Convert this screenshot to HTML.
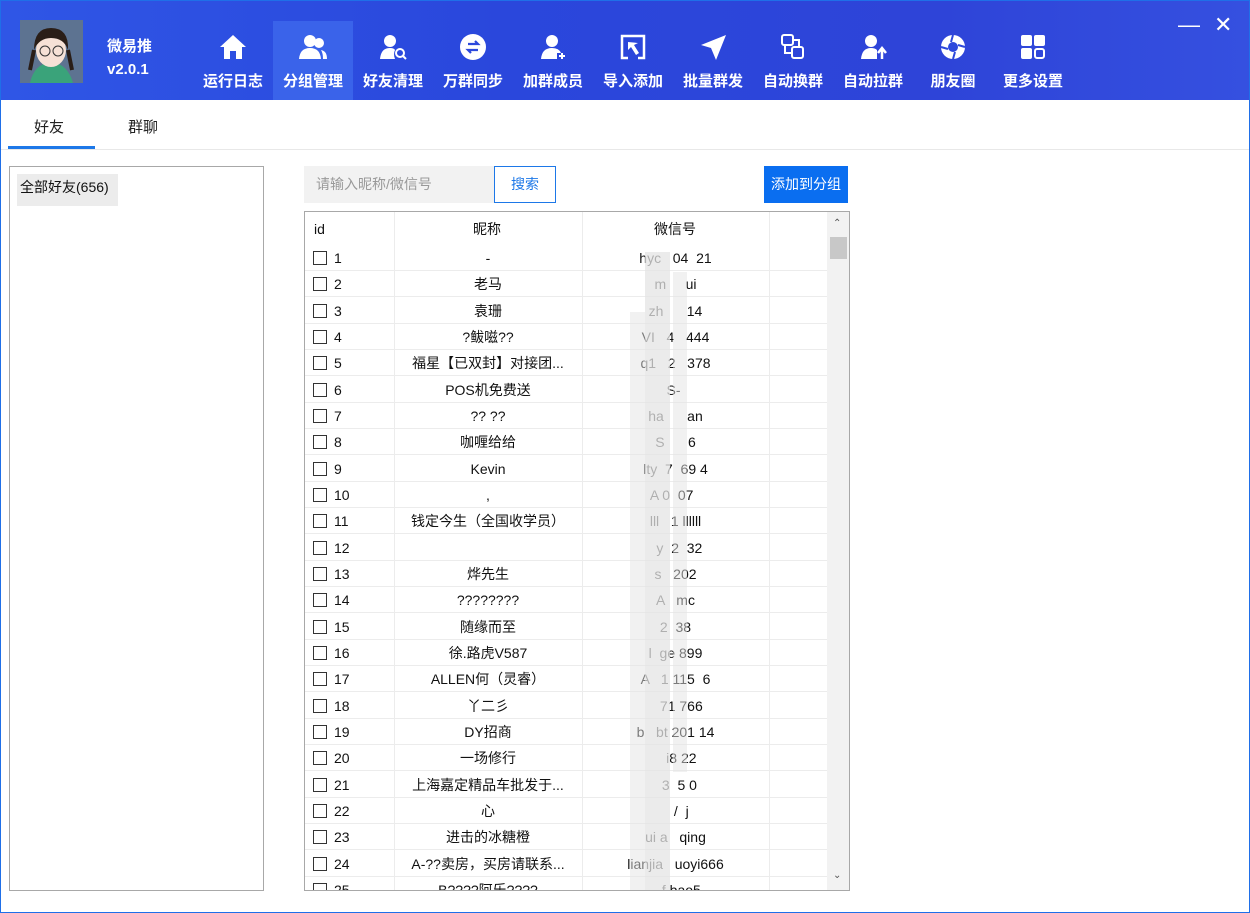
<!DOCTYPE html>
<html><head><meta charset="utf-8"><style>
*{margin:0;padding:0;box-sizing:border-box}
body{width:1250px;height:913px;background:#fff;font-family:"Liberation Sans","Noto Sans CJK SC",sans-serif;position:relative;overflow:hidden}
.frame{position:absolute;left:0;top:0;width:1250px;height:913px;border:1px solid #1f6fe8;pointer-events:none}
.hdr{position:absolute;left:0;top:0;width:1250px;height:100px;background:linear-gradient(90deg,#2f56e6 0%,#2a47dc 40%,#2e44d8 75%,#3550e0 100%)}
.av{position:absolute;left:20px;top:20px;width:63px;height:63px;background:#5a7090}
.nm{position:absolute;left:107px;top:35px;color:#fff;font-size:15px;font-weight:bold}
.ver{position:absolute;left:107px;top:61px;color:#fff;font-size:15px;font-weight:bold}
.nav{position:absolute;top:21px;height:79px;width:80px;text-align:center;color:#fff;font-size:15px;font-weight:bold}
.nav.act{background:#3a63ea}
.nav svg{position:absolute;left:26px;top:12px}
.nav span{position:absolute;left:0;right:0;top:49px}
.wc{position:absolute;color:#fff;font-size:22px;top:12px}
.tab{position:absolute;top:116px;font-size:15px;color:#222}
.tabline{position:absolute;left:8px;top:146px;width:87px;height:3px;background:#1d78e8}
.sep{position:absolute;left:0;top:149px;width:1250px;height:1px;background:#e8e8e8}
.left{position:absolute;left:9px;top:166px;width:255px;height:725px;border:1px solid #a8a8a8}
.left div{position:absolute;left:7px;top:7px;width:101px;height:32px;background:#ececec;font-size:14px;line-height:26px;padding-left:3px;color:#111}
.inp{position:absolute;left:304px;top:166px;width:190px;height:37px;background:#f2f2f2;color:#999;font-size:14px;line-height:37px;padding-left:12px}
.sbtn{position:absolute;left:494px;top:166px;width:62px;height:37px;border:1px solid #1d78e8;color:#1d78e8;font-size:14px;line-height:35px;text-align:center}
.abtn{position:absolute;left:764px;top:166px;width:84px;height:37px;background:#0a6ef0;color:#fff;font-size:14px;line-height:37px;text-align:center}
.tbl{position:absolute;left:304px;top:211px;width:546px;height:680px;border:1px solid #a8a8a8;overflow:hidden}
.th{position:absolute;top:0;height:33px;font-size:14px;line-height:34px;color:#111}
.row{position:absolute;left:0;width:522px;height:26px;border-bottom:1px solid #ececec;font-size:14px;color:#111;line-height:26px}
.row .id{position:absolute;left:8px;top:0}
.cb{display:inline-block;width:14px;height:14px;border:1px solid #333;vertical-align:-2px;margin-right:7px}
.row .n{position:absolute;left:89px;width:188px;text-align:center}
.row .w{position:absolute;left:277px;width:187px;text-align:center;white-space:pre}
.vl{position:absolute;top:0;width:1px;height:680px;background:#ececec}
.sb{position:absolute;left:522px;top:0;width:22px;height:678px;background:#f2f2f2}
.thumb{position:absolute;left:3px;top:25px;width:17px;height:22px;background:#c8c8c8}
.blur{position:absolute;background:#e4e4e4;opacity:.75}
</style></head><body>
<div class="hdr">
 <div class="av"><svg width="63" height="63"><rect width="63" height="63" fill="#5d7391"/><path d="M10 63 Q14 44 31 42 Q48 44 53 63Z" fill="#3aa37a"/><ellipse cx="31" cy="30" rx="15" ry="17" fill="#f6e1d6"/><path d="M14 30 Q14 8 31 8 Q49 8 48 30 Q44 18 31 18 Q19 18 14 30Z" fill="#2a1e18"/><circle cx="25" cy="31" r="5" fill="none" stroke="#333"/><circle cx="38" cy="31" r="5" fill="none" stroke="#333"/><path d="M14 30 L10 50 M48 30 L52 50" stroke="#2a1e18" stroke-width="4"/></svg></div>
 <div class="nm">微易推</div><div class="ver">v2.0.1</div>
 <div class="nav" style="left:193px"><svg width="28" height="28" viewBox="0 0 28 28"><path d="M14 2 L27 14 H23 V26 H17 V18 H11 V26 H5 V14 H1Z" fill="#fff"/></svg><span>运行日志</span></div>
 <div class="nav act" style="left:273px"><svg width="28" height="28" viewBox="0 0 28 28"><circle cx="11" cy="8" r="6" fill="#fff"/><circle cx="20" cy="10" r="5" fill="#fff"/><path d="M0 26 Q1 15 11 15 Q21 15 22 26Z M22 17 Q28 18 28 26 H24 Q24 20 22 17Z" fill="#fff"/></svg><span>分组管理</span></div>
 <div class="nav" style="left:353px"><svg width="28" height="28" viewBox="0 0 28 28"><circle cx="11" cy="8" r="6" fill="#fff"/><path d="M1 26 Q2 15 11 15 Q15 15 16 17 Q14 21 16 26Z" fill="#fff"/><circle cx="21" cy="20" r="4" fill="none" stroke="#fff" stroke-width="2"/><path d="M24 23 L27 26" stroke="#fff" stroke-width="2"/></svg><span>好友清理</span></div>
 <div class="nav" style="left:433px"><svg width="28" height="28" viewBox="0 0 28 28"><circle cx="14" cy="14" r="13" fill="#fff"/><path d="M9 11 H19 L16 8 M19 17 H9 L12 20" stroke="#2c48dc" stroke-width="2.2" fill="none"/></svg><span>万群同步</span></div>
 <div class="nav" style="left:513px"><svg width="28" height="28" viewBox="0 0 28 28"><circle cx="13" cy="8" r="6" fill="#fff"/><path d="M2 26 Q3 15 13 15 Q20 15 22 20 H18 V26Z" fill="#fff"/><path d="M23 20 V26 M20 23 H26" stroke="#fff" stroke-width="2"/></svg><span>加群成员</span></div>
 <div class="nav" style="left:593px"><svg width="28" height="28" viewBox="0 0 28 28"><path d="M9 25 H3 V3 H25 V25 H19" stroke="#fff" stroke-width="2.5" fill="none"/><path d="M9 9 L9 17 L12 14 L17 22 L20 20 L15 12 L19 10Z" fill="#fff"/></svg><span>导入添加</span></div>
 <div class="nav" style="left:673px"><svg width="28" height="28" viewBox="0 0 28 28"><path d="M27 2 L2 12 L12 15 L17 27Z" fill="#fff"/></svg><span>批量群发</span></div>
 <div class="nav" style="left:753px"><svg width="28" height="28" viewBox="0 0 28 28"><rect x="3" y="2" width="11" height="10" rx="2" fill="none" stroke="#fff" stroke-width="2"/><rect x="13" y="14" width="11" height="11" rx="2" fill="none" stroke="#fff" stroke-width="2"/><path d="M6 12 V20 H13 M14 7 H20 V14" stroke="#fff" stroke-width="2" fill="none"/></svg><span>自动换群</span></div>
 <div class="nav" style="left:833px"><svg width="28" height="28" viewBox="0 0 28 28"><circle cx="12" cy="8" r="6" fill="#fff"/><path d="M2 26 Q3 15 12 15 Q16 15 18 17 V26Z" fill="#fff"/><path d="M23 26 V16 M19 20 L23 15 L27 20" stroke="#fff" stroke-width="2.5" fill="none"/></svg><span>自动拉群</span></div>
 <div class="nav" style="left:913px"><svg width="28" height="28" viewBox="0 0 28 28"><circle cx="14" cy="14" r="12" fill="#fff"/><circle cx="14" cy="14" r="5" fill="#2c48dc"/><path d="M14 2 L12 9 M26 14 L19 12 M14 26 L16 19 M2 14 L9 16" stroke="#2c48dc" stroke-width="2"/></svg><span>朋友圈</span></div>
 <div class="nav" style="left:993px"><svg width="28" height="28" viewBox="0 0 28 28"><rect x="2" y="2" width="11" height="11" rx="2" fill="#fff"/><rect x="15" y="2" width="11" height="11" rx="2" fill="#fff"/><rect x="2" y="15" width="11" height="11" rx="2" fill="#fff"/><rect x="16" y="16" width="9" height="9" rx="2" fill="none" stroke="#fff" stroke-width="2"/></svg><span>更多设置</span></div>
 <div class="wc" style="left:1178px">—</div><div class="wc" style="left:1214px">✕</div>
</div>
<div class="tab" style="left:34px">好友</div><div class="tab" style="left:128px">群聊</div>
<div class="tabline"></div><div class="sep"></div>
<div class="left"><div>全部好友(656)</div></div>
<div class="inp">请输入昵称/微信号</div><div class="sbtn">搜索</div><div class="abtn">添加到分组</div>
<div class="tbl">
 <div class="vl" style="left:89px"></div><div class="vl" style="left:277px"></div><div class="vl" style="left:464px"></div>
 <div class="th" style="left:9px">id</div><div class="th" style="left:168px">昵称</div><div class="th" style="left:349px">微信号</div>
 <div class="row" style="top:33px"><span class="id"><i class="cb"></i>1</span><span class="n">-</span><span class="w">hyc   04  21</span></div>
 <div class="row" style="top:59px"><span class="id"><i class="cb"></i>2</span><span class="n">老马</span><span class="w">m     ui</span></div>
 <div class="row" style="top:86px"><span class="id"><i class="cb"></i>3</span><span class="n">袁珊</span><span class="w">zh      14</span></div>
 <div class="row" style="top:112px"><span class="id"><i class="cb"></i>4</span><span class="n">?鲅嗞??</span><span class="w">VI   4   444</span></div>
 <div class="row" style="top:138px"><span class="id"><i class="cb"></i>5</span><span class="n">福星【已双封】对接团...</span><span class="w">q1   2   378</span></div>
 <div class="row" style="top:165px"><span class="id"><i class="cb"></i>6</span><span class="n">POS机免费送</span><span class="w">  S-   </span></div>
 <div class="row" style="top:191px"><span class="id"><i class="cb"></i>7</span><span class="n">?? ??</span><span class="w">ha      an</span></div>
 <div class="row" style="top:217px"><span class="id"><i class="cb"></i>8</span><span class="n">咖喱给给</span><span class="w">S      6</span></div>
 <div class="row" style="top:244px"><span class="id"><i class="cb"></i>9</span><span class="n">Kevin</span><span class="w">lty  7  69 4</span></div>
 <div class="row" style="top:270px"><span class="id"><i class="cb"></i>10</span><span class="n">,</span><span class="w">A 0  07  </span></div>
 <div class="row" style="top:296px"><span class="id"><i class="cb"></i>11</span><span class="n">钱定今生（全国收学员）</span><span class="w">lll   1 llllll</span></div>
 <div class="row" style="top:323px"><span class="id"><i class="cb"></i>12</span><span class="n"></span><span class="w">  y  2  32</span></div>
 <div class="row" style="top:349px"><span class="id"><i class="cb"></i>13</span><span class="n">烨先生</span><span class="w">s   202</span></div>
 <div class="row" style="top:375px"><span class="id"><i class="cb"></i>14</span><span class="n">????????</span><span class="w">A   mc</span></div>
 <div class="row" style="top:402px"><span class="id"><i class="cb"></i>15</span><span class="n">随缘而至</span><span class="w">  2  38  </span></div>
 <div class="row" style="top:428px"><span class="id"><i class="cb"></i>16</span><span class="n">徐.路虎V587</span><span class="w">l  ge 899</span></div>
 <div class="row" style="top:454px"><span class="id"><i class="cb"></i>17</span><span class="n">ALLEN何（灵睿）</span><span class="w">A   1 115  6</span></div>
 <div class="row" style="top:481px"><span class="id"><i class="cb"></i>18</span><span class="n">丫二彡</span><span class="w">   71 766</span></div>
 <div class="row" style="top:507px"><span class="id"><i class="cb"></i>19</span><span class="n">DY招商</span><span class="w">b   bt 201 14</span></div>
 <div class="row" style="top:533px"><span class="id"><i class="cb"></i>20</span><span class="n">一场修行</span><span class="w">   i8 22</span></div>
 <div class="row" style="top:560px"><span class="id"><i class="cb"></i>21</span><span class="n">上海嘉定精品车批发于...</span><span class="w">  3  5 0</span></div>
 <div class="row" style="top:586px"><span class="id"><i class="cb"></i>22</span><span class="n">心</span><span class="w">   /  j</span></div>
 <div class="row" style="top:612px"><span class="id"><i class="cb"></i>23</span><span class="n">进击的冰糖橙</span><span class="w">ui a   qing</span></div>
 <div class="row" style="top:639px"><span class="id"><i class="cb"></i>24</span><span class="n">A-??卖房，买房请联系...</span><span class="w">lianjia   uoyi666</span></div>
 <div class="row" style="top:665px"><span class="id"><i class="cb"></i>25</span><span class="n">B????阿乐????</span><span class="w">   f bao5</span></div>
 <div class="blur" style="left:340px;top:40px;width:25px;height:640px"></div>
 <div class="blur" style="left:325px;top:100px;width:15px;height:580px;opacity:.5"></div>
 <div class="blur" style="left:368px;top:60px;width:14px;height:500px;opacity:.5"></div>
 <div class="sb"><div style="position:absolute;left:6px;top:6px;font-size:10px;color:#555">⌃</div><div class="thumb"></div><div style="position:absolute;left:6px;top:658px;font-size:10px;color:#555">⌄</div></div>
</div>
<div class="frame"></div>
</body></html>
